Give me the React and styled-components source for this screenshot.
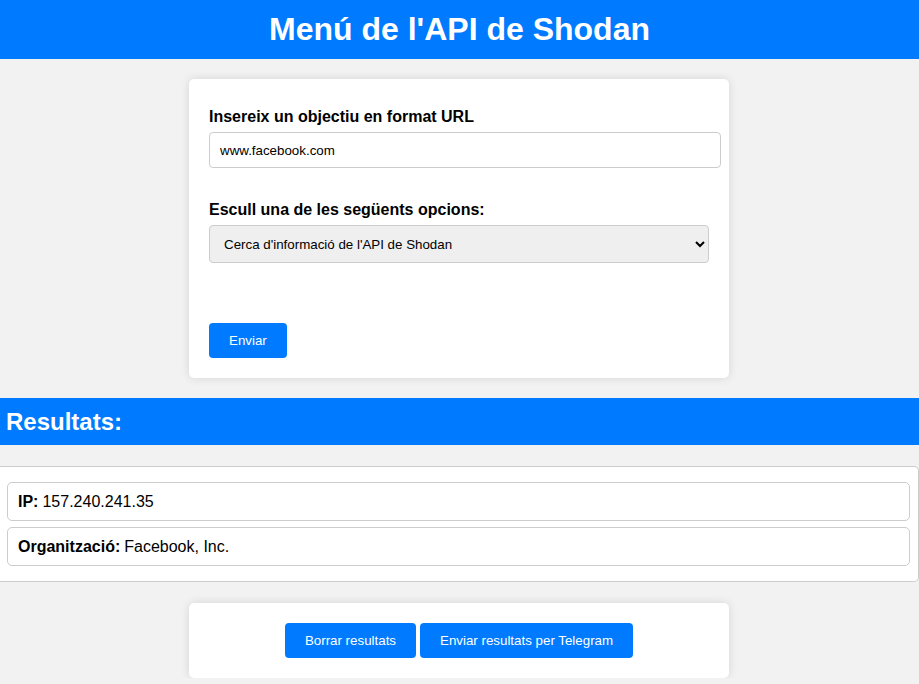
import React, { useState } from 'react'
import styled, { createGlobalStyle } from 'styled-components'

const GlobalStyle = createGlobalStyle`
  body {
    margin: 0;
    background: #f2f2f2;
    font-family: "Liberation Sans", Arial, sans-serif;
    color: #000;
    overflow-x: hidden;
  }
`

const Header = styled.header`
  background: #007bff;
  height: 59px;
  display: flex;
  align-items: center;
  justify-content: center;
`

const Title = styled.h1`
  margin: 0;
  color: #fff;
  font-size: 32px;
  font-weight: bold;
`

const Card = styled.div`
  width: 540px;
  box-sizing: border-box;
  margin: ${({top})=>top}px 0 0 calc(50% - 270.5px);
  background: #fff;
  border-radius: 5px;
  box-shadow: 0 0 10px rgba(0, 0, 0, 0.12);
  padding: 20px;
  display: flex;
  flex-direction: column;
  align-items: ${({center})=>(center ? "center" : "flex-start")};
`

const Label = styled.label`
  display: block;
  font-size: 16px;
  font-weight: bold;
  line-height: 18px;
  margin: ${({gap})=>gap}px 0 6px;
`

const Input = styled.input`
  width: 512px;
  height: 36px;
  box-sizing: border-box;
  padding: 0 10px;
  font-family: inherit;
  font-size: 13.33px;
  border: 1px solid #ccc;
  border-radius: 4px;
  outline: none;
`

const Select = styled.select`
  width: 500px;
  height: 38px;
  box-sizing: border-box;
  padding: 0 10px;
  font-family: inherit;
  font-size: 13.33px;
  color: #000;
  background: #efefef;
  border: 1px solid #ccc;
  border-radius: 4px;
`

const Button = styled.button`
  background: #007bff;
  color: #fff;
  border: none;
  border-radius: 4px;
  height: 35px;
  padding: 0 20px;
  font-family: inherit;
  font-size: 13.33px;
  cursor: pointer;
`

const SubmitButton = styled(Button)`
  margin-top: 60px;
`

const ResultsBar = styled.div`
  background: #007bff;
  margin-top: 20px;
  height: 47px;
  display: flex;
  align-items: center;
  padding: 0 6px;
`

const ResultsTitle = styled.h2`
  margin: 0;
  color: #fff;
  font-size: 24px;
  font-weight: bold;
`

const Results = styled.div`
  margin-top: 21px;
  background: #fff;
  border: 1px solid #ccc;
  border-left: none;
  border-radius: 0 5px 5px 0;
  padding: 15px 8px 15px 7px;
  display: flex;
  flex-direction: column;
  gap: 6px;
`

const Item = styled.div`
  border: 1px solid #ccc;
  border-radius: 5px;
  padding: 0 10px;
  height: 39px;
  box-sizing: border-box;
  display: flex;
  align-items: center;
  font-size: 16px;
  b { margin-right: 4px; }
`

const ButtonRow = styled.div`
  display: flex;
  gap: 4px;
`

const results = [
  { key: "IP:", value: "157.240.241.35" },
  { key: "Organització:", value: "Facebook, Inc." },
]

const App = () => {
  const [url, setUrl] = useState("www.facebook.com")

  return (
    <>
      <GlobalStyle />
      <Header>
        <Title>Menú de l'API de Shodan</Title>
      </Header>
      <Card top={20}>
        <Label gap={9}>Insereix un objectiu en format URL</Label>
        <Input type="text" value={url} onChange={(e)=>setUrl(e.target.value)} />
        <Label gap={33}>Escull una de les següents opcions:</Label>
        <Select defaultValue="info">
          <option value="info">Cerca d'informació de l'API de Shodan</option>
        </Select>
        <SubmitButton>Enviar</SubmitButton>
      </Card>
      <ResultsBar>
        <ResultsTitle>Resultats:</ResultsTitle>
      </ResultsBar>
      <Results>
        {results.map((r, index)=>(
          <Item key={index}>
            <b>{r.key}</b> {r.value}
          </Item>
        ))}
      </Results>
      <Card top={21} center>
        <ButtonRow>
          <Button>Borrar resultats</Button>
          <Button>Enviar resultats per Telegram</Button>
        </ButtonRow>
      </Card>
    </>
  )
}

export default App
